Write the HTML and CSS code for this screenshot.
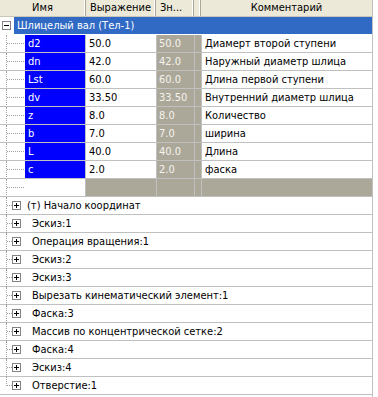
FILE: index.html
```html
<!DOCTYPE html>
<html lang="ru">
<head>
  <meta charset="UTF-8">
  <title>Переменные</title>
  <link rel="stylesheet" href="styles.css">
</head>
<body>
  <div class="tree">

    <div class="head">
      <div class="hcell">Имя</div>
      <div class="hcell">Выражение</div>
      <div class="hcell left">Зн...</div>
      <div class="hcell"></div>
      <div class="hcell">Комментарий</div>
    </div>

    <div class="root">
      <span class="box minus"></span>
      <span class="root-label">Шлицелый вал (Тел-1)</span>
    </div>

    <div class="param">
      <div class="name"><span class="guide"></span><span class="pname">d2</span></div>
      <div class="expr">50.0</div>
      <div class="val">50.0</div>
      <div class="pad"></div>
      <div class="note">Диамерт второй ступени</div>
    </div>
    <div class="param">
      <div class="name"><span class="guide"></span><span class="pname">dn</span></div>
      <div class="expr">42.0</div>
      <div class="val">42.0</div>
      <div class="pad"></div>
      <div class="note">Наружный диаметр шлица</div>
    </div>
    <div class="param">
      <div class="name"><span class="guide"></span><span class="pname">Lst</span></div>
      <div class="expr">60.0</div>
      <div class="val">60.0</div>
      <div class="pad"></div>
      <div class="note">Длина первой ступени</div>
    </div>
    <div class="param">
      <div class="name"><span class="guide"></span><span class="pname">dv</span></div>
      <div class="expr">33.50</div>
      <div class="val">33.50</div>
      <div class="pad"></div>
      <div class="note">Внутренний диаметр шлица</div>
    </div>
    <div class="param">
      <div class="name"><span class="guide"></span><span class="pname">z</span></div>
      <div class="expr">8.0</div>
      <div class="val">8.0</div>
      <div class="pad"></div>
      <div class="note">Количество</div>
    </div>
    <div class="param">
      <div class="name"><span class="guide"></span><span class="pname">b</span></div>
      <div class="expr">7.0</div>
      <div class="val">7.0</div>
      <div class="pad"></div>
      <div class="note">ширина</div>
    </div>
    <div class="param">
      <div class="name"><span class="guide"></span><span class="pname">L</span></div>
      <div class="expr">40.0</div>
      <div class="val">40.0</div>
      <div class="pad"></div>
      <div class="note">Длина</div>
    </div>
    <div class="param">
      <div class="name"><span class="guide"></span><span class="pname">c</span></div>
      <div class="expr">2.0</div>
      <div class="val">2.0</div>
      <div class="pad"></div>
      <div class="note">фаска</div>
    </div>
    <div class="param empty">
      <div class="name"><span class="guide"></span></div>
      <div class="expr"></div>
      <div class="val"></div>
      <div class="pad"></div>
      <div class="note"></div>
    </div>

    <div class="item"><span class="guide short"></span><span class="box plus"></span><span class="label">(т) Начало координат</span></div>
    <div class="item"><span class="guide short"></span><span class="box plus"></span><span class="label ind">Эскиз:1</span></div>
    <div class="item"><span class="guide short"></span><span class="box plus"></span><span class="label ind">Операция вращения:1</span></div>
    <div class="item"><span class="guide short"></span><span class="box plus"></span><span class="label ind">Эскиз:2</span></div>
    <div class="item"><span class="guide short"></span><span class="box plus"></span><span class="label ind">Эскиз:3</span></div>
    <div class="item"><span class="guide short"></span><span class="box plus"></span><span class="label ind">Вырезать кинематический элемент:1</span></div>
    <div class="item"><span class="guide short"></span><span class="box plus"></span><span class="label ind">Фаска:3</span></div>
    <div class="item"><span class="guide short"></span><span class="box plus"></span><span class="label ind">Массив по концентрической сетке:2</span></div>
    <div class="item"><span class="guide short"></span><span class="box plus"></span><span class="label ind">Фаска:4</span></div>
    <div class="item"><span class="guide short"></span><span class="box plus"></span><span class="label ind">Эскиз:4</span></div>
    <div class="item last"><span class="guide short"></span><span class="box plus"></span><span class="label ind">Отверстие:1</span></div>

  </div>
</body>
</html>
```

FILE: styles.css
```css
body{
  margin: 0;
  background: #ffffff;
  font-family: "DejaVu Sans Condensed", "DejaVu Sans", sans-serif;
  font-stretch: condensed;
  font-size: 11px;
  color: #000000;
}

.tree{
  width: 372px;
  min-height: 397px;
  border-right: 1px solid #c0c0c0;
}

/* header */
.head{
  display: grid;
  grid-template-columns: 86px 70px 38px 7px 1fr;
  height: 16px;
  background: #ece9d8;
  border-bottom: 1px solid #cbc7b8;
}
.hcell{
  line-height: 16px;
  text-align: center;
  border-right: 1px solid #aca899;
  box-shadow: inset -1px 0 0 #ffffff;
  overflow: hidden;
  white-space: nowrap;
}
.hcell.left{
  text-align: left;
  padding-left: 4px;
}
.hcell:last-child{
  border-right: none;
  box-shadow: none;
}

/* root node */
.root{
  display: flex;
  align-items: center;
  height: 17px;
  border-bottom: 1px solid #ffffff;
}
.root .box{
  margin-left: 2px;
}
.root-label{
  flex: 1;
  margin-left: 3px;
  height: 17px;
  line-height: 17px;
  padding-left: 3px;
  background: #316ac5;
  color: #ffffff;
}

.box{
  width: 7px;
  height: 7px;
  border: 1px solid #848284;
  background: #ffffff;
  position: relative;
  flex: none;
}
.box::before{
  content: "";
  position: absolute;
  left: 1px;
  top: 3px;
  width: 5px;
  height: 1px;
  background: #000000;
}
.plus::after{
  content: "";
  position: absolute;
  left: 3px;
  top: 1px;
  width: 1px;
  height: 5px;
  background: #000000;
}

/* tree guides */
.guide{
  width: 25px;
  height: 100%;
  position: relative;
  flex: none;
}
.guide::before{
  content: "";
  position: absolute;
  left: 6px;
  top: 0;
  bottom: -1px;
  border-left: 1px dotted #a0a0a0;
}
.guide::after{
  content: "";
  position: absolute;
  left: 7px;
  top: 8px;
  width: 17px;
  border-top: 1px dotted #a0a0a0;
}
.guide.short{
  width: 12px;
}
.guide.short::after{
  width: 5px;
}
.last .guide::before{
  bottom: auto;
  height: 9px;
}

/* parameter rows */
.param{
  display: grid;
  grid-template-columns: 85px 70px 37px 6px 1fr;
  column-gap: 1px;
  height: 17px;
  line-height: 17px;
  background: #c0c0c0;
  border-bottom: 1px solid #c0c0c0;
}
.param > div{
  overflow: hidden;
  white-space: nowrap;
}
.name{
  display: flex;
  background: #ffffff;
}
.pname{
  flex: 1;
  padding-left: 3px;
  background: #0000ff;
  color: #ffffff;
}
.expr{
  padding-left: 3px;
  background: #ffffff;
}
.val{
  padding-left: 2px;
  background: #aca899;
  color: #f4f3ee;
}
.pad{
  background: #aca899;
}
.note{
  padding-left: 3px;
  background: #ffffff;
}
.empty .expr,
.empty .note{
  background: #aca899;
}

/* feature rows */
.item{
  display: flex;
  align-items: center;
  height: 17px;
  border-bottom: 1px solid #c0c0c0;
}
.label{
  padding-left: 6px;
  white-space: nowrap;
}
.label.ind{
  padding-left: 11px;
}
```
